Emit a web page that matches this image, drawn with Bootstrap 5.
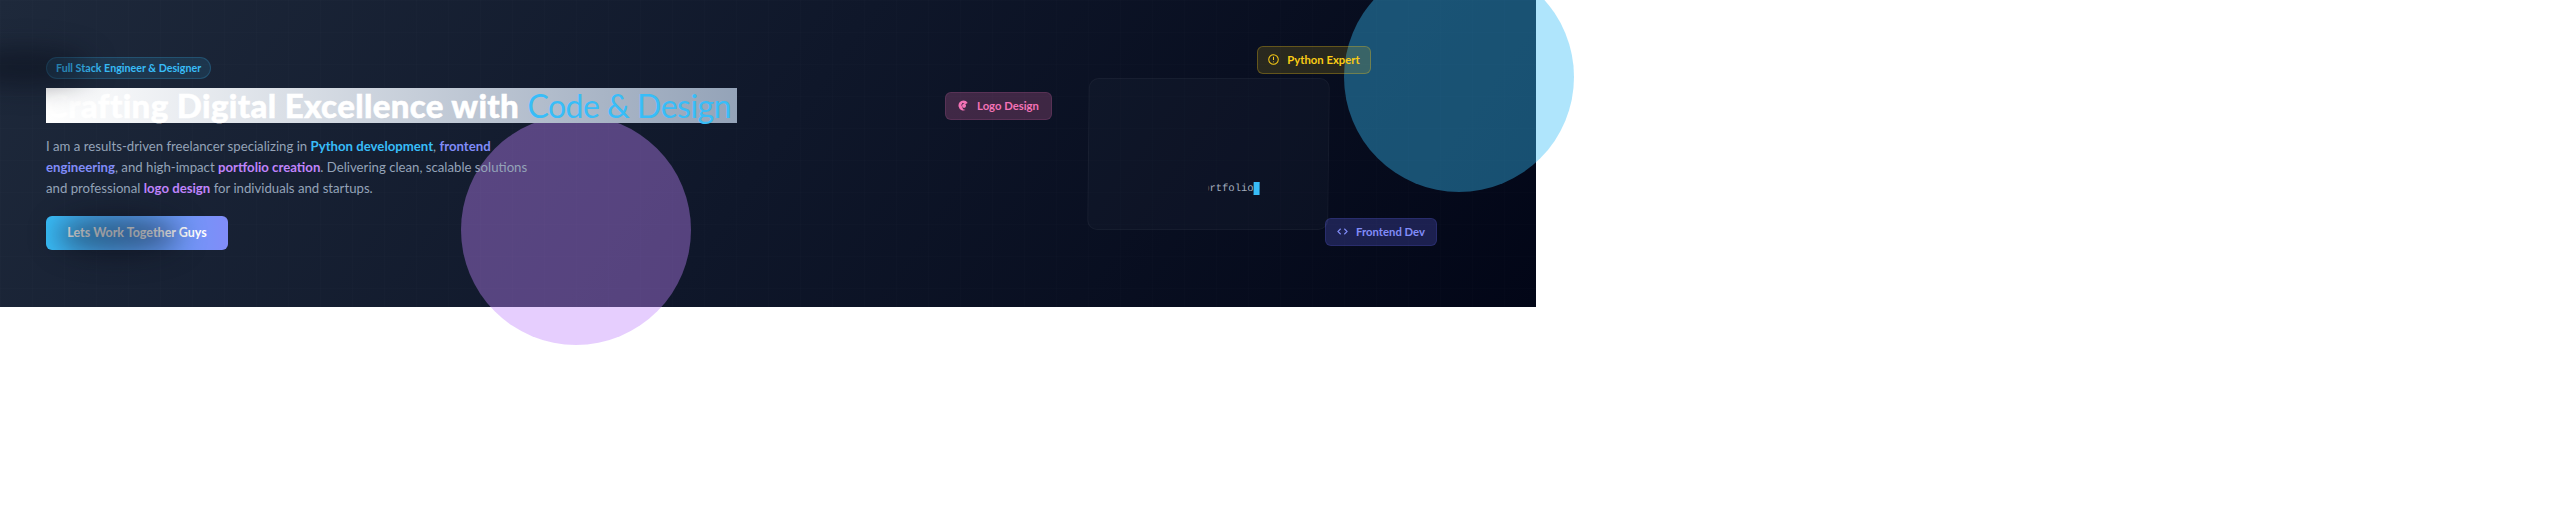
<!DOCTYPE html>
<html>
  <head>
    <title>Portfolio</title>
    <link href="https://cdn.jsdelivr.net/npm/bootstrap@5.3.0/dist/css/bootstrap.min.css" rel="stylesheet">
    <style>
      body {
        font-family: "Lato", "Noto Sans", sans-serif;
        background-color: #FFFFFF;
        min-height: 100vh;
      }
      .hero-wrap {
        width: 1536px;
        height: 307px;
        padding: 0 207px 0 46px;
        background-color: #0f172a;
        background-image:
          linear-gradient(rgba(255,255,255,.009) 1px, transparent 1px),
          linear-gradient(90deg, rgba(255,255,255,.009) 1px, transparent 1px),
          linear-gradient(125deg, #1e293b 0%, #0f172a 50%, #020617 100%);
        background-size: 32px 32px, 32px 32px, auto;
      }
      .blob {
        position: absolute;
        width: 230px;
        height: 230px;
        border-radius: 50%;
        opacity: .4;
      }
      .blob-purple { left: 461px; top: 115px; background: #c084fc; }
      .blob-blue { left: 1344px; top: -38px; background: #38bdf8; }
      .hero-text { width: 691px; z-index: 1; }
      .tag-pill {
        width: fit-content;
        height: 22px;
        padding: 0 9px;
        margin-bottom: 9px;
        font-size: 10.7px;
        font-weight: 700;
        color: #38bdf8;
        background: rgba(56,189,248,.12);
        border: 1px solid rgba(56,189,248,.2);
        border-radius: 50rem;
      }
      .hero-title {
        margin-bottom: 13px;
        font-size: 33px;
        line-height: 34px;
        font-weight: 900;
        letter-spacing: .35px;
        white-space: nowrap;
        color: #fff;
        -webkit-text-stroke: .5px #fff;
        background: linear-gradient(90deg, #fff 0%, #94a3b8 100%);
      }
      .hero-title span {
        color: #38bdf8;
        font-size: 32px;
        font-weight: 400;
        letter-spacing: -.5px;
        -webkit-text-stroke: 0;
      }
      .hero-copy {
        width: 495px;
        margin-bottom: 17px;
        font-size: 13.2px;
        line-height: 21px;
        color: #94a3b8;
      }
      .hero-copy b { font-weight: 700; }
      .c-blue { color: #38bdf8; }
      .c-indigo { color: #818cf8; }
      .c-purple { color: #c084fc; }
      .cta-btn {
        width: 182px;
        height: 34px;
        padding: 0;
        font-size: 12.5px;
        font-weight: 700;
        color: #fff;
        border: 0;
        border-radius: 6px;
        background: linear-gradient(90deg, #38bdf8, #818cf8);
      }
      .term-card {
        width: 241px;
        height: 152px;
        margin-left: auto;
        background: rgba(30,41,59,.22);
        border: 1px solid rgba(255,255,255,.04);
        border-radius: 10px;
        transform: skewX(-.65deg);
        z-index: 1;
      }
      .term-line {
        position: absolute;
        left: 120px;
        top: 103px;
        height: 13px;
        font-family: "Liberation Mono", monospace;
        font-size: 10.5px;
        line-height: 13px;
        color: #a3adbd;
      }
      .term-clip { width: 45px; overflow: hidden; }
      .term-cursor { width: 6px; background: #38bdf8; }
      .chip {
        position: absolute;
        height: 28px;
        font-size: 11.3px;
        font-weight: 700;
        border-radius: 6px;
        border: 1px solid;
        z-index: 2;
      }
      .chip svg { width: 11px; height: 11px; margin-top: -2px; }
      .chip-python { left: 1257px; top: 46px; width: 114px; color: #facc15; background: rgba(250,204,21,.14); border-color: rgba(250,204,21,.28); }
      .chip-logo { left: 945px; top: 92px; width: 107px; color: #f472b6; background: rgba(244,114,182,.22); border-color: rgba(244,114,182,.14); }
      .chip-front { left: 1325px; top: 218px; width: 112px; color: #818cf8; background: rgba(99,102,241,.25); border-color: rgba(99,102,241,.18); }
      .shade {
        position: absolute;
        border-radius: 50%;
        background: rgba(6,10,22,.5);
        filter: blur(14px);
        z-index: 3;
      }
      .shade-top { left: -40px; top: 50px; width: 130px; height: 34px; }
      .shade-btn { left: 55px; top: 216px; width: 125px; height: 38px; }
    </style>
  </head>
  <body>
    <div class="hero-wrap position-relative d-flex align-items-center">
      <div class="blob blob-purple"></div>
      <div class="blob blob-blue"></div>

      <div class="hero-text position-relative">
        <div class="tag-pill d-flex align-items-center">Full Stack Engineer &amp; Designer</div>
        <h1 class="hero-title">Crafting Digital Excellence with <span>Code &amp; Design</span></h1>
        <p class="hero-copy">
          I am a results-driven freelancer specializing in <b class="c-blue">Python development</b>, <b class="c-indigo">frontend engineering</b>, and high-impact <b class="c-purple">portfolio creation</b>. Delivering clean, scalable solutions and professional <b class="c-purple">logo design</b> for individuals and startups.
        </p>
        <button class="btn cta-btn" type="button">Lets Work Together Guys</button>
      </div>

      <div class="term-card position-relative">
        <div class="term-line d-flex">
          <div class="term-clip d-flex justify-content-end">portfolio</div>
          <div class="term-cursor"></div>
        </div>
      </div>

      <div class="chip chip-python d-flex align-items-center justify-content-center gap-2">
        <svg viewBox="0 0 12 12" fill="none" stroke="currentColor" stroke-width="1.1"><circle cx="6" cy="6" r="5.2"/><path d="M6 3v3.6M6 8.2v.8"/></svg>
        Python Expert
      </div>
      <div class="chip chip-logo d-flex align-items-center justify-content-center gap-2">
        <svg viewBox="0 0 12 12" fill="currentColor"><path fill-rule="evenodd" d="M6 .6a5.4 5.4 0 0 1 4.6 2.6L7.6 4.6 5 3 3.6 5.4l2 4.6 2.6.9A5.4 5.4 0 1 1 6 .6Z"/><path d="M6.6 4.2a2.2 2.2 0 1 1 0 4.4 2.2 2.2 0 0 1 0-4.4Z"/></svg>
        Logo Design
      </div>
      <div class="chip chip-front d-flex align-items-center justify-content-center gap-2">
        <svg viewBox="0 0 12 12" fill="none" stroke="currentColor" stroke-width="1.2"><path d="M4 3 1 6l3 3M8 3l3 3-3 3"/></svg>
        Frontend Dev
      </div>

      <div class="shade shade-top"></div>
      <div class="shade shade-btn"></div>
    </div>

    <script src="https://cdn.jsdelivr.net/npm/bootstrap@5.3.0/dist/js/bootstrap.bundle.min.js"></script>
  </body>
</html>
